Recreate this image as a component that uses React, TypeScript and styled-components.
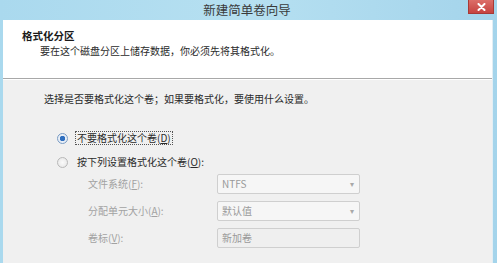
import styled, { createGlobalStyle } from "styled-components";

const GlobalStyle = createGlobalStyle`
  html, body {
    margin: 0;
    padding: 0;
    overflow: hidden;
  }
  body {
    font-family: "Noto Sans CJK SC", "Liberation Sans", sans-serif;
  }
`;

const fields = [
  { label: "文件系统(", key: "F", value: "NTFS", select: true },
  { label: "分配单元大小(", key: "A", value: "默认值", select: true },
  { label: "卷标(", key: "V", value: "新加卷", select: false },
];

function App() {
  return (
    <>
      <GlobalStyle />
      <StWindow>
        <StTitleBar>
          <span />
          <StTitle>新建简单卷向导</StTitle>
          <StCloseButton>
            <svg width="9" height="8" viewBox="0 0 9 8">
              <path
                d="M1.5 1 L7.5 7 M7.5 1 L1.5 7"
                stroke="#fff"
                strokeWidth="2"
                strokeLinecap="round"
              />
            </svg>
          </StCloseButton>
        </StTitleBar>
        <StClient>
          <StHeader>
            <StHeaderTitle>格式化分区</StHeaderTitle>
            <StHeaderText>要在这个磁盘分区上储存数据，你必须先将其格式化。</StHeaderText>
          </StHeader>
          <StBody>
            <StQuestion>选择是否要格式化这个卷；如果要格式化，要使用什么设置。</StQuestion>
            <StRadioGroup>
              <StRadioRow>
                <StRadio checked />
                <StRadioLabel focused>
                  不要格式化这个卷(<u>D</u>)
                </StRadioLabel>
              </StRadioRow>
              <StRadioRow>
                <StRadio />
                <StRadioLabel>
                  按下列设置格式化这个卷(<u>O</u>):
                </StRadioLabel>
              </StRadioRow>
            </StRadioGroup>
            <StFormGrid>
              {fields.map((field) => (
                <StFieldRow key={field.key}>
                  <StFieldLabel>
                    {field.label}
                    <u>{field.key}</u>):
                  </StFieldLabel>
                  <StInputBox select={field.select}>
                    {field.value}
                    {field.select && <StArrow>▾</StArrow>}
                  </StInputBox>
                </StFieldRow>
              ))}
            </StFormGrid>
          </StBody>
        </StClient>
      </StWindow>
    </>
  );
}

const StWindow = styled.div`
  width: 497px;
  height: 263px;
  display: flex;
  flex-direction: column;
  background: linear-gradient(90deg, #aad9ee 0%, #b6e0f1 50%, #a4d4eb 100%);
  overflow: hidden;
`;

const StTitleBar = styled.div`
  height: 20px;
  display: grid;
  grid-template-columns: 1fr auto 1fr;
  align-items: start;
  padding-right: 3px;
`;

const StTitle = styled.div`
  font-size: 12.5px;
  line-height: 20px;
  color: #3a3a3a;
`;

const StCloseButton = styled.div`
  justify-self: end;
  width: 26px;
  height: 14px;
  background: linear-gradient(180deg, #dc6e68 0%, #c64440 100%);
  border: 1px solid #a83a36;
  border-top: none;
  box-sizing: border-box;
  display: flex;
  align-items: center;
  justify-content: center;
`;

const StClient = styled.div`
  flex: 1;
  display: flex;
  flex-direction: column;
  margin: 0 5px 0 3px;
  box-shadow: 1px 0 0 #e2eef4;
`;

const StHeader = styled.div`
  height: 59px;
  box-sizing: border-box;
  background: #ffffff;
  padding: 8px 0 0 19px;
  border-bottom: 1px solid #a8a8a8;
`;

const StHeaderTitle = styled.div`
  font-size: 10.5px;
  line-height: 15px;
  font-weight: bold;
  color: #1a1a1a;
`;

const StHeaderText = styled.div`
  font-size: 10px;
  line-height: 15px;
  color: #2a2a2a;
  padding-left: 18px;
`;

const StBody = styled.div`
  flex: 1;
  background: #f0f0f0;
  border-top: 1px solid #ffffff;
  padding: 11px 0 0 41px;
`;

const StQuestion = styled.div`
  font-size: 10px;
  line-height: 15px;
  color: #2a2a2a;
`;

const StRadioGroup = styled.div`
  display: flex;
  flex-direction: column;
  gap: 8px;
  margin-top: 24px;
  padding-left: 13px;
`;

const StRadioRow = styled.div`
  display: flex;
  align-items: center;
  gap: 7px;
  height: 16px;
`;

const StRadio = styled.div<{ checked?: boolean }>`
  width: 9px;
  height: 9px;
  border-radius: 50%;
  border: 1px solid ${(props) => (props.checked ? "#7a9cc4" : "#b8b8b8")};
  background: ${(props) =>
    props.checked
      ? "radial-gradient(circle, #2f6fbf 0 2.5px, #e8eef6 3px)"
      : "radial-gradient(circle, #fafafa 0, #e4e4e4 100%)"};
  flex-shrink: 0;
`;

const StRadioLabel = styled.div<{ focused?: boolean }>`
  font-size: 10px;
  line-height: 12px;
  color: #2a2a2a;
  padding: 0 1px;
  border: 1px dotted ${(props) => (props.focused ? "#555" : "transparent")};

  u {
    text-underline-offset: 1px;
  }
`;

const StFormGrid = styled.div`
  display: flex;
  flex-direction: column;
  gap: 7px;
  margin-top: 4px;
  padding-left: 44px;
`;

const StFieldRow = styled.div`
  display: grid;
  grid-template-columns: 129px 143px;
  align-items: center;
  height: 20px;
`;

const StFieldLabel = styled.div`
  font-size: 10px;
  line-height: 14px;
  color: #a2a2a2;
`;

const StInputBox = styled.div<{ select?: boolean }>`
  height: 20px;
  box-sizing: border-box;
  border: 1px solid #cfcfcf;
  border-radius: 2px;
  background: ${(props) => (props.select ? "#f6f6f6" : "#efefef")};
  font-size: 10px;
  line-height: 18px;
  color: #9a9a9a;
  padding-left: 4px;
  display: flex;
  justify-content: space-between;
  align-items: center;
`;

const StArrow = styled.span`
  font-size: 8px;
  color: #a8a8a8;
  padding-right: 5px;
`;

export default App;
